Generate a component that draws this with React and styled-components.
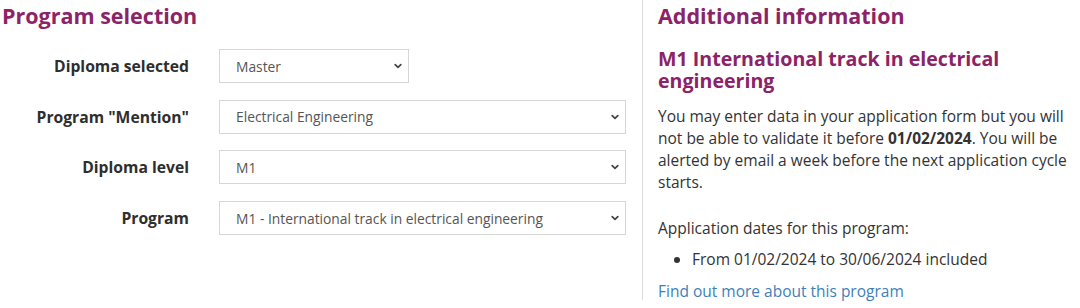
import React from 'react';
import styled, { createGlobalStyle } from 'styled-components';

const purple = '#8c2368';

const Global = createGlobalStyle`
  html, body {
    margin: 0;
    padding: 0;
    background: #fff;
  }
  body {
    font-family: "Open Sans", "Noto Sans", sans-serif;
    color: #333;
  }
`;

const Page = styled.div`
  display: grid;
  grid-template-columns: 642px 1fr;
  width: 1080px;
  height: 308px;
  overflow: hidden;
`;

const Left = styled.section`
  padding: 0 0 0 2px;
`;

const Right = styled.section`
  border-left: 1px solid #dcdcdc;
  padding: 0 4px 0 15px;
  height: 300px;
`;

const Title = styled.h2`
  margin: 4px 0 0;
  font-size: 21.5px;
  line-height: 24px;
  font-weight: 700;
  color: ${purple};
`;

const Form = styled.div`
  display: flex;
  flex-direction: column;
  gap: 16.7px;
  margin-top: 21px;
`;

const Row = styled.div`
  display: grid;
  grid-template-columns: 187px 1fr;
  column-gap: 30px;
  align-items: center;
`;

const Label = styled.label`
  text-align: right;
  font-size: 15.7px;
  font-weight: 700;
  color: #2e2e2e;
`;

const SelectWrap = styled.div`
  position: relative;
  width: ${p => p.$w}px;
  height: 34px;
`;

const Select = styled.select`
  appearance: none;
  -webkit-appearance: none;
  width: 100%;
  height: 100%;
  box-sizing: border-box;
  border: 1px solid #d6d6d6;
  border-radius: 0;
  background: #fff;
  padding: 0 30px 0 16px;
  font-family: "Open Sans", sans-serif;
  font-size: 13.8px;
  color: #555;
  outline: none;
`;

const Chevron = styled.svg`
  position: absolute;
  right: 7px;
  top: 50%;
  width: 8px;
  height: 8px;
  margin-top: -4px;
  pointer-events: none;
`;

const SubTitle = styled.h3`
  margin: 20px 0 0;
  font-size: 19.6px;
  line-height: 22px;
  font-weight: 700;
  color: ${purple};
`;

const Para = styled.p`
  margin: ${p => p.$mt || 0}px 0 0;
  font-size: 15.5px;
  line-height: 22px;
  color: #333;
`;

const List = styled.ul`
  margin: 9px 0 0;
  padding-left: 34px;
  font-size: 15.5px;
  line-height: 22px;
`;

const Link = styled.a`
  display: block;
  margin-top: 10px;
  font-size: 15.5px;
  line-height: 22px;
  color: #3f7fb8;
  text-decoration: none;
`;

const Dropdown = ({ value, width }) => (
  <SelectWrap $w={width}>
    <Select defaultValue={value}>
      <option>{value}</option>
    </Select>
    <Chevron viewBox="0 0 8 8">
      <path d="M1.2 2.6 L4 5.4 L6.8 2.6" fill="none" stroke="#444" strokeWidth="1.7" strokeLinecap="round" strokeLinejoin="round" />
    </Chevron>
  </SelectWrap>
);

const rows = [
  { label: 'Diploma selected', value: 'Master', width: 190 },
  { label: 'Program "Mention"', value: 'Electrical Engineering', width: 407 },
  { label: 'Diploma level', value: 'M1', width: 407 },
  { label: 'Program', value: 'M1 - International track in electrical engineering', width: 407 },
];

export default function App() {
  return (
    <>
      <Global />
      <Page>
        <Left>
          <Title>Program selection</Title>
          <Form>
            {rows.map(r => (
              <Row key={r.label}>
                <Label>{r.label}</Label>
                <Dropdown value={r.value} width={r.width} />
              </Row>
            ))}
          </Form>
        </Left>
        <Right>
          <Title>Additional information</Title>
          <SubTitle>M1 International track in electrical engineering</SubTitle>
          <Para $mt={13}>
            You may enter data in your application form but you will not be able to validate it before <b>01/02/2024</b>. You will be alerted by email a week before the next application cycle starts.
          </Para>
          <Para $mt={24}>Application dates for this program:</Para>
          <List>
            <li>From 01/02/2024 to 30/06/2024 included</li>
          </List>
          <Link href="#">Find out more about this program</Link>
        </Right>
      </Page>
    </>
  );
}
